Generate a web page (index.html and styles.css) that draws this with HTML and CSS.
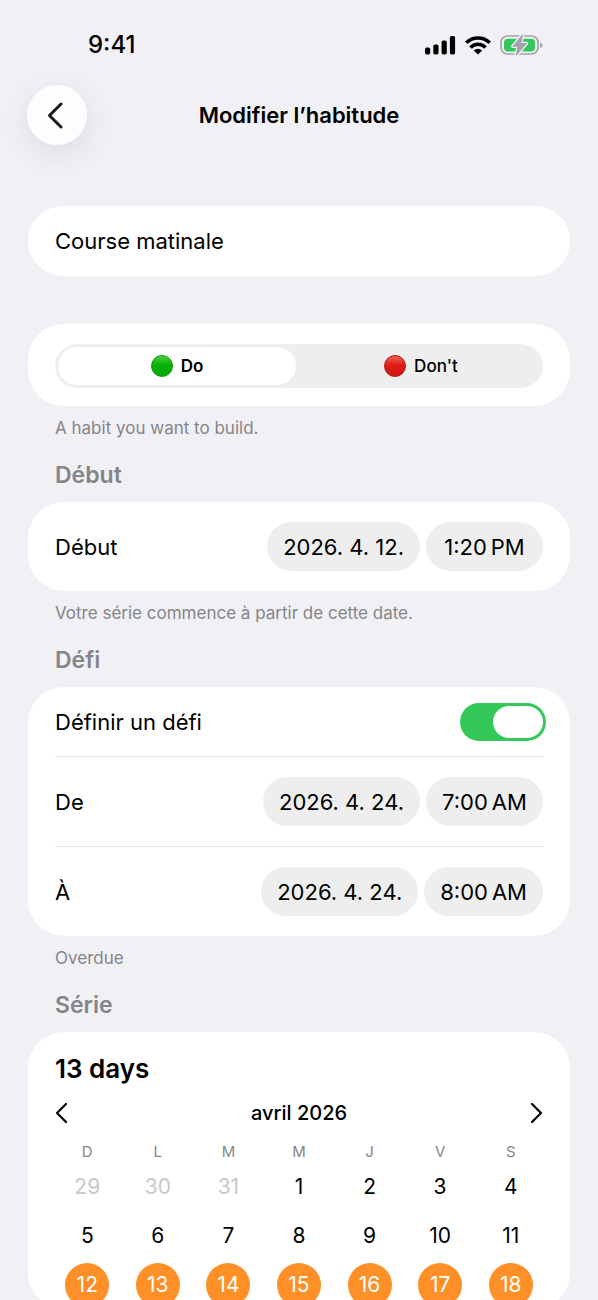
FILE: index.html
```
<!DOCTYPE html>
<html lang="fr">
<head>
<meta charset="utf-8">
<meta name="viewport" content="width=device-width, initial-scale=1">
<title>Modifier l’habitude</title>
<link rel="stylesheet" href="styles.css">
</head>
<body>
<div class="screen">
  <div class="status">
    <span class="status-time">9:41</span>
    <span class="status-icons">
      <svg width="31" height="20" viewBox="0 0 31 20" aria-hidden="true">
        <rect x="0" y="12.500" width="5.200" height="7" rx="1.700"/>
        <rect x="8.300" y="9.500" width="5.200" height="10" rx="1.700"/>
        <rect x="16.600" y="5.500" width="5.200" height="14" rx="1.700"/>
        <rect x="24.900" y="1" width="5.200" height="18.500" rx="1.700"/>
      </svg>
      <svg width="26" height="20" viewBox="0 0 26 20" aria-hidden="true">
        <g fill="none" stroke="#000" stroke-width="3.600">
          <path d="M1.300 7.800A16.700 16.700 0 0 1 24.700 7.800"/>
          <path d="M5.500 12.500A10.300 10.300 0 0 1 20.500 12.500"/>
        </g>
        <path d="M13 19.600L8.800 15.400Q13 12 17.200 15.400Z"/>
      </svg>
      <svg width="43" height="22" viewBox="0 0 43 22" aria-hidden="true">
        <rect x="1" y="2" width="37" height="18" rx="6.500" fill="none" stroke="#a3a3a8" stroke-width="1.700"/>
        <rect x="4" y="4.800" width="31" height="12.600" rx="4" fill="#34c759"/>
        <path d="M40 8.500Q42.500 9.300 42.500 11.300T40 14Z" fill="#a3a3a8"/>
        <path d="M22.500 0.800L12.800 12.300H18L16.200 21.200L26.500 9.500H20.800Z" fill="#a3a3a8" stroke="#f1f0f5" stroke-width="3.400" stroke-linejoin="round"/>
        <path d="M22.500 0.800L12.800 12.300H18L16.200 21.200L26.500 9.500H20.800Z" fill="#a3a3a8" stroke="#a3a3a8" stroke-width="1" stroke-linejoin="round"/>
      </svg>
    </span>
  </div>

  <header class="navbar">
    <button class="back" type="button" aria-label="Retour">
      <svg width="18" height="28" viewBox="0 0 18 28" aria-hidden="true"><path d="M15 3L3.500 14.500L15 26"/></svg>
    </button>
    <h1 class="title">Modifier l’habitude</h1>
  </header>

  <main class="form">
    <div class="card name-card">
      <input class="name-input" type="text" value="Course matinale" aria-label="Nom">
    </div>

    <div class="card type-card">
      <div class="segmented" role="radiogroup" aria-label="Type">
        <label class="segment">
          <input class="segment-input" type="radio" name="type" checked>
          <span class="segment-face"><span class="dot dot-green"></span>Do</span>
        </label>
        <label class="segment">
          <input class="segment-input" type="radio" name="type">
          <span class="segment-face"><span class="dot dot-red"></span>Don't</span>
        </label>
      </div>
    </div>
    <p class="note">A habit you want to build.</p>

    <h2 class="section-title">Début</h2>
    <div class="card">
      <div class="row">
        <span class="row-label" id="start">Début</span>
        <div class="pills" role="group" aria-labelledby="start">
          <button class="pill" type="button">2026. 4. 12.</button>
          <button class="pill" type="button">1:20&#8201;PM</button>
        </div>
      </div>
    </div>
    <p class="note">Votre série commence à partir de cette date.</p>

    <h2 class="section-title">Défi</h2>
    <div class="card">
      <div class="row row-short">
        <label class="row-label" for="challenge">Définir un défi</label>
        <input class="switch" id="challenge" type="checkbox" role="switch" checked>
      </div>
      <div class="row">
        <span class="row-label" id="from">De</span>
        <div class="pills" role="group" aria-labelledby="from">
          <button class="pill" type="button">2026. 4. 24.</button>
          <button class="pill" type="button">7:00&#8201;AM</button>
        </div>
      </div>
      <div class="row">
        <span class="row-label" id="to">À</span>
        <div class="pills" role="group" aria-labelledby="to">
          <button class="pill" type="button">2026. 4. 24.</button>
          <button class="pill" type="button">8:00&#8201;AM</button>
        </div>
      </div>
    </div>
    <p class="note">Overdue</p>

    <h2 class="section-title">Série</h2>
    <section class="card streak">
      <h3 class="streak-count">13 days</h3>
      <div class="month">
        <button class="month-nav" type="button" aria-label="Mois précédent">
          <svg width="14" height="22" viewBox="0 0 14 22" aria-hidden="true"><path d="M11 2L2 11L11 20"/></svg>
        </button>
        <span class="month-name">avril 2026</span>
        <button class="month-nav" type="button" aria-label="Mois suivant">
          <svg width="14" height="22" viewBox="0 0 14 22" aria-hidden="true"><path d="M3 2L12 11L3 20"/></svg>
        </button>
      </div>
      <table class="calendar">
        <thead>
          <tr><th>D</th><th>L</th><th>M</th><th>M</th><th>J</th><th>V</th><th>S</th></tr>
        </thead>
        <tbody>
          <tr><td class="outside">29</td><td class="outside">30</td><td class="outside">31</td><td>1</td><td>2</td><td>3</td><td>4</td></tr>
          <tr><td>5</td><td>6</td><td>7</td><td>8</td><td>9</td><td>10</td><td>11</td></tr>
          <tr>
            <td><span class="done">12</span></td><td><span class="done">13</span></td><td><span class="done">14</span></td><td><span class="done">15</span></td><td><span class="done">16</span></td><td><span class="done">17</span></td><td><span class="done">18</span></td>
          </tr>
        </tbody>
      </table>
    </section>
  </main>
</div>
</body>
</html>
```
FILE: styles.css
```
* {
  box-sizing: border-box;
}

body {
  margin: 0;
  background: #f1f0f5;
  color: #000;
  font-family: Inter, "Liberation Sans", sans-serif;
  font-size: 22px;
}

button,
input {
  margin: 0;
  border: 0;
  padding: 0;
  background: none;
  color: inherit;
  font: inherit;
}

h1, h2, h3, p {
  margin: 0;
}

svg {
  display: block;
}

.screen {
  height: 100vh;
  overflow-y: auto;
  scrollbar-width: none;
}

.status {
  display: flex;
  justify-content: space-between;
  align-items: center;
  height: 85px;
  padding: 4px 55px 0 88px;
}

.status-time {
  font-size: 24px;
  font-weight: 500;
}

.status-icons {
  display: flex;
  align-items: center;
  gap: 9px;
}

.navbar {
  display: grid;
  grid-template-columns: 60px 1fr 60px;
  align-items: center;
  padding: 0 27px;
}

.back {
  display: flex;
  align-items: center;
  justify-content: center;
  width: 60px;
  height: 60px;
  padding-right: 4px;
  border-radius: 50%;
  background: #fdfdff;
  box-shadow: 0 8px 32px rgba(0, 0, 0, 0.09);
}

.back path,
.month-nav path {
  fill: none;
  stroke: #000;
  stroke-linecap: round;
  stroke-linejoin: round;
}

.back path {
  stroke: #1a1a1c;
  stroke-width: 3;
}

.title {
  font-size: 22px;
  font-weight: 600;
  text-align: center;
}

.form {
  padding: 61px 28px 0;
}

.card {
  border-radius: 36px;
  background: #fff;
}

.name-card {
  margin-bottom: 48px;
}

.name-input {
  display: block;
  width: 100%;
  height: 70px;
  padding: 0 27px;
  outline: 0;
}

.type-card {
  padding: 20px 27px 18px;
}

.segmented {
  display: grid;
  grid-template-columns: 1fr 1fr;
  gap: 6px;
  padding: 3px;
  border-radius: 22px;
  background: #eee;
}

.segment {
  display: block;
}

.segment-input {
  position: absolute;
  opacity: 0;
}

.segment-face {
  display: flex;
  align-items: center;
  justify-content: center;
  gap: 8px;
  height: 38px;
  border-radius: 19px;
  font-size: 17px;
  font-weight: 500;
}

.segment-input:checked + .segment-face {
  background: #fff;
  font-weight: 600;
}

.dot {
  width: 22px;
  height: 22px;
  border-radius: 50%;
}

.dot-green {
  border: 1px solid #0a9a08;
  background: linear-gradient(#4bd03f, #06b004 45%, #08a806);
}

.dot-red {
  border: 1px solid #b81512;
  background: linear-gradient(#f2614f, #df1c17 45%, #cf1512);
}

.note {
  padding: 10px 27px 0;
  color: #858589;
  font-size: 17px;
  line-height: 24px;
}

.section-title {
  padding: 21px 27px 13px;
  color: #858589;
  font-size: 23px;
  font-weight: 600;
  line-height: 28px;
}

.row {
  display: flex;
  align-items: center;
  justify-content: space-between;
  box-sizing: content-box;
  height: 89px;
  margin: 0 27px;
}

.row-short {
  height: 69px;
}

.row + .row {
  border-top: 1px solid #e4e4e6;
}

.pills {
  display: flex;
  gap: 6px;
}

.pill {
  min-width: 117px;
  height: 49px;
  padding: 0 16px;
  border-radius: 25px;
  background: #eee;
  white-space: nowrap;
}

.switch {
  display: flex;
  justify-content: flex-end;
  width: 86px;
  height: 38px;
  margin-right: -3px;
  padding: 3px;
  border-radius: 19px;
  background: #34c759;
  appearance: none;
}

.switch::before {
  content: "";
  width: 50px;
  height: 32px;
  border-radius: 16px;
  background: #fff;
}

.switch:not(:checked) {
  justify-content: flex-start;
  background: #d8d8dc;
}

.streak {
  padding: 20px 24px 0;
}

.streak-count {
  padding: 0 3px;
  font-size: 26px;
  font-weight: 600;
  line-height: 34px;
}

.month {
  display: flex;
  align-items: center;
  justify-content: space-between;
  height: 54px;
  padding: 0 3px;
}

.month-nav path {
  stroke-width: 2.2;
}

.month-name {
  font-size: 20px;
  font-weight: 500;
}

.calendar {
  width: 100%;
  border-collapse: collapse;
  table-layout: fixed;
}

.calendar th {
  height: 22px;
  padding: 0;
  color: #858589;
  font-size: 15px;
  font-weight: 400;
}

.calendar td {
  height: 49px;
  padding: 0;
  font-size: 21px;
  text-align: center;
}

.calendar .outside {
  color: #c8c8ca;
}

.done {
  display: block;
  width: 44px;
  margin: 0 auto;
  border-radius: 50%;
  background: #ff8f27;
  color: #fff;
  line-height: 44px;
}
```
